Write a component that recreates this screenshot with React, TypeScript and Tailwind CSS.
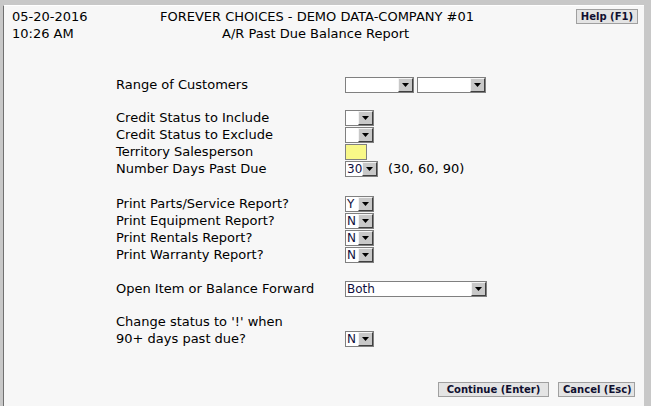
import React from "react";

const font = "font-['Tahoma','DejaVu_Sans','Verdana',sans-serif]";

function Arrow() {
  return (
    <span className="flex h-full w-[15px] shrink-0 items-center justify-center border border-t-[#f4f4f4] border-l-[#f4f4f4] border-r-[#404040] border-b-[#404040] bg-[#c8c8c8]">
      <svg width="7" height="4" viewBox="0 0 7 4">
        <path d="M0 0h7L3.5 4z" fill="#000" />
      </svg>
    </span>
  );
}

function Select({ width, value = "" }: { width: string; value?: string }) {
  return (
    <div className={`flex h-[16px] ${width} border border-[#808080] bg-white`}>
      <span className="flex-1 overflow-hidden whitespace-nowrap pl-[1px] text-[12px] leading-[14px] text-[#101040]">
        {value}
      </span>
      <Arrow />
    </div>
  );
}

function Row({ label, children }: { label: string; children?: React.ReactNode }) {
  return (
    <div className="flex h-[17px] items-center">
      <span className="w-[229px] shrink-0 whitespace-nowrap text-[13px] leading-[17px]">{label}</span>
      {children}
    </div>
  );
}

function Btn({ children, className = "" }: { children: React.ReactNode; className?: string }) {
  return (
    <button
      className={`h-[15px] whitespace-nowrap border border-[#a0a0a0] bg-[#e4e4e4] px-[4px] text-[10px] font-bold leading-[13px] text-[#101030] ${className}`}
    >
      {children}
    </button>
  );
}

export default function App() {
  return (
    <div className={`h-[406px] w-[651px] overflow-hidden bg-[#c8c8c8] pl-[3px] pr-[7px] pt-[5px] text-black ${font}`}>
      <div className="flex h-[401px] flex-col border-l border-t border-l-[#707070] border-t-white bg-[#f7f7f7]">
        {/* header */}
        <div className="mt-[2px] flex h-[17px] items-center whitespace-nowrap text-[13px]">
          <span className="w-[156px] shrink-0 pl-[8px]">05-20-2016</span>
          <span>FOREVER CHOICES - DEMO DATA-COMPANY #01</span>
          <Btn className="ml-auto mr-[6px] px-[3px]">Help (F1)</Btn>
        </div>
        <div className="flex h-[17px] items-center whitespace-nowrap text-[13px]">
          <span className="w-[218px] shrink-0 pl-[8px]">10:26 AM</span>
          <span>A/R Past Due Balance Report</span>
        </div>

        {/* form */}
        <div className="mt-[34px] flex flex-col pl-[112px]">
          <Row label="Range of Customers">
            <div className="flex gap-[3px]">
              <Select width="w-[69px]" />
              <Select width="w-[69px]" />
            </div>
          </Row>

          <div className="mt-[16px]">
            <Row label="Credit Status to Include">
              <Select width="w-[29px]" />
            </Row>
            <Row label="Credit Status to Exclude">
              <Select width="w-[29px]" />
            </Row>
            <Row label="Territory Salesperson">
              <div className="h-[16px] w-[22px] border border-[#808080] bg-[#f8f888]" />
            </Row>
            <Row label="Number Days Past Due">
              <Select width="w-[33px]" value="30" />
              <span className="ml-[10px] whitespace-nowrap text-[13px]">(30, 60, 90)</span>
            </Row>
          </div>

          <div className="mt-[18px]">
            <Row label="Print Parts/Service Report?">
              <Select width="w-[29px]" value="Y" />
            </Row>
            <Row label="Print Equipment Report?">
              <Select width="w-[29px]" value="N" />
            </Row>
            <Row label="Print Rentals Report?">
              <Select width="w-[29px]" value="N" />
            </Row>
            <Row label="Print Warranty Report?">
              <Select width="w-[29px]" value="N" />
            </Row>
          </div>

          <div className="mt-[17px]">
            <Row label="Open Item or Balance Forward">
              <Select width="w-[142px]" value="Both" />
            </Row>
          </div>

          <div className="mt-[16px]">
            <Row label="Change status to '!' when" />
            <Row label="90+ days past due?">
              <Select width="w-[29px]" value="N" />
            </Row>
          </div>
        </div>

        <div className="mt-[35px] flex justify-end gap-[9px] pr-[9px]">
          <Btn className="w-[111px]">Continue (Enter)</Btn>
          <Btn className="w-[77px]">Cancel (Esc)</Btn>
        </div>
      </div>
    </div>
  );
}
